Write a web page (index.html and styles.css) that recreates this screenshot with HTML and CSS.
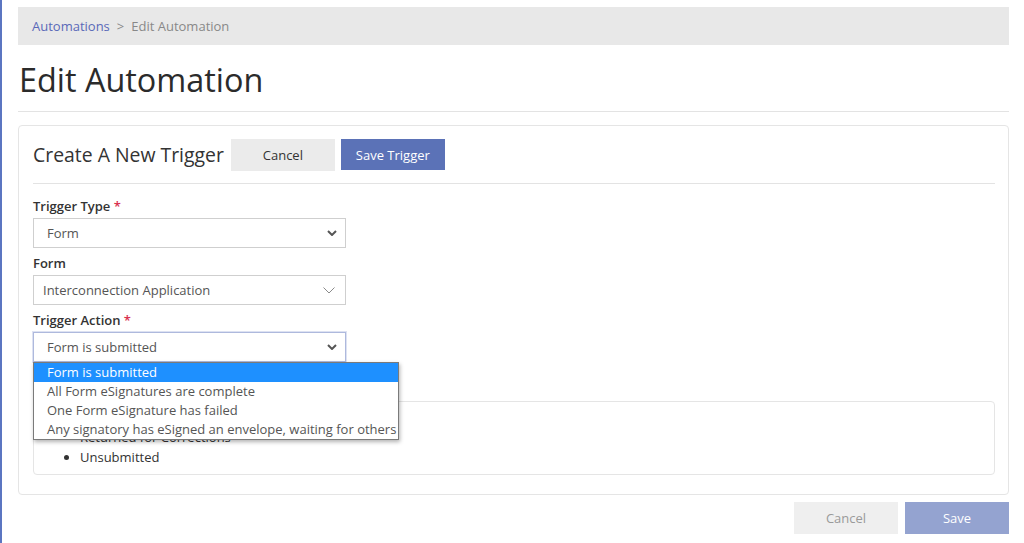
FILE: index.html
```html
<!DOCTYPE html>
<html lang="en">
<head>
<meta charset="utf-8">
<title>Edit Automation</title>
<link rel="stylesheet" href="styles.css">
</head>
<body>
<div class="page">
  <nav class="breadcrumb">
    <a class="crumb-link" href="#">Automations</a>
    <span class="crumb-sep">&gt;</span>
    <span class="crumb-current">Edit Automation</span>
  </nav>
  <h1 class="page-title">Edit Automation</h1>
  <hr class="page-rule">

  <section class="card">
    <div class="card-header">
      <h2 class="card-title">Create A New Trigger</h2>
      <button class="btn btn-light">Cancel</button>
      <button class="btn btn-primary">Save Trigger</button>
    </div>
    <hr class="card-rule">

    <div class="field">
      <label class="field-label">Trigger Type <span class="req">*</span></label>
      <div class="select">
        <span class="select-value">Form</span>
        <svg class="chev" width="10" height="6" viewBox="0 0 10 6"><path d="M1 1 L5 5 L9 1" fill="none" stroke="#555" stroke-width="2"/></svg>
      </div>
    </div>

    <div class="field">
      <label class="field-label">Form</label>
      <div class="select select-custom">
        <span class="select-value">Interconnection Application</span>
        <svg class="chev chev-thin" width="12" height="7" viewBox="0 0 12 7"><path d="M0.5 0.5 L6 6 L11.5 0.5" fill="none" stroke="#8a8a8a" stroke-width="1"/></svg>
      </div>
    </div>

    <div class="field field-action">
      <label class="field-label">Trigger Action <span class="req">*</span></label>
      <div class="select select-focus">
        <span class="select-value">Form is submitted</span>
        <svg class="chev" width="10" height="6" viewBox="0 0 10 6"><path d="M1 1 L5 5 L9 1" fill="none" stroke="#555" stroke-width="2"/></svg>
      </div>
      <ul class="dropdown">
        <li class="option option-active">Form is submitted</li>
        <li class="option">All Form eSignatures are complete</li>
        <li class="option">One Form eSignature has failed</li>
        <li class="option">Any signatory has eSigned an envelope, waiting for others</li>
      </ul>
    </div>

    <div class="status-box">
      <ul class="status-list">
        <li>Submitted</li>
        <li>Returned for Corrections</li>
        <li>Unsubmitted</li>
      </ul>
    </div>
  </section>

  <div class="footer-actions">
    <button class="btn btn-muted">Cancel</button>
    <button class="btn btn-disabled">Save</button>
  </div>
</div>
</body>
</html>
```

FILE: styles.css
```css
* { box-sizing: border-box; }

html, body {
  margin: 0;
  padding: 0;
  background: #fff;
}

body {
  font-family: "Open Sans", "Noto Sans", sans-serif;
  font-size: 13px;
  color: #333;
  border-left: 2px solid #5b75c1;
  min-height: 543px;
}

.page {
  padding: 7px 15px 0 16px;
}

.breadcrumb {
  height: 38px;
  background: #e8e8e8;
  display: flex;
  align-items: center;
  padding-left: 14px;
  font-size: 13px;
  gap: 7px;
}

.crumb-link {
  color: #5a68b8;
  text-decoration: none;
}

.crumb-sep { color: #8a8a8a; }
.crumb-current { color: #888; }

.page-title {
  font-weight: 400;
  font-size: 32.4px;
  margin: 12px 0 0 1px;
  line-height: 44px;
  color: #2b2b2b;
}

.page-rule {
  border: 0;
  border-top: 1px solid #e3e3e3;
  margin: 10px 0 13px;
}

.card {
  border: 1px solid #e5e5e5;
  border-radius: 4px;
  padding: 13px 13px 19px 14px;
  position: relative;
}

.card-header {
  display: flex;
  align-items: center;
  gap: 6px;
}

.card-title {
  font-size: 19.4px;
  font-weight: 400;
  margin: 0 1px 0 0;
  color: #333;
  line-height: 32px;
}

.btn {
  font-family: "Open Sans", "Noto Sans", sans-serif;
  font-size: 13px;
  width: 104px;
  height: 32px;
  border: 0;
  border-radius: 0;
  padding: 0;
}

.btn-light {
  background: #ebebeb;
  color: #333;
}

.btn-primary {
  background: #5b72b7;
  color: #fff;
  height: 31px;
  align-self: flex-start;
}

.card-rule {
  border: 0;
  border-top: 1px solid #e3e3e3;
  margin: 12px 0 13px;
}

.field { margin-bottom: 6px; }

.field-label {
  display: block;
  font-weight: 600;
  font-size: 13px;
  line-height: 18px;
  color: #333;
  margin-bottom: 3px;
}

.req { color: #d9304f; }

.select {
  width: 313px;
  height: 30px;
  border: 1px solid #cfcfcf;
  display: flex;
  align-items: center;
  justify-content: space-between;
  padding: 0 8px 0 13px;
  color: #555;
  background: #fff;
}

.select-custom { padding-left: 9px; padding-right: 10px; }

.select-focus {
  border-color: #aeb9dd;
  box-shadow: 0 0 0 1px #dde2f2;
}

.chev { display: block; }

.field-action { position: relative; }

.dropdown {
  position: absolute;
  left: 0;
  top: 51px;
  width: 366px;
  margin: 0;
  padding: 0;
  list-style: none;
  background: #fff;
  border: 1px solid #7a7a7a;
  box-shadow: 1px 2px 4px rgba(0,0,0,0.3);
  z-index: 2;
}

.option {
  height: 19px;
  line-height: 19px;
  padding-left: 13px;
  color: #555;
  white-space: nowrap;
}

.option-active {
  background: #1e90ff;
  color: #fff;
}

.status-box {
  margin-top: 39px;
  border: 1px solid #e5e5e5;
  border-radius: 4px;
  padding: 5px 0 7px 0;
}

.status-list {
  margin: 0;
  padding-left: 46px;
  line-height: 20px;
  color: #333;
}

.footer-actions {
  display: flex;
  justify-content: flex-end;
  gap: 7px;
  margin-top: 7px;
}

.btn-muted {
  background: #efefef;
  color: #9a9a9a;
}

.btn-disabled {
  background: #94a3d0;
  color: #fff;
}
```
